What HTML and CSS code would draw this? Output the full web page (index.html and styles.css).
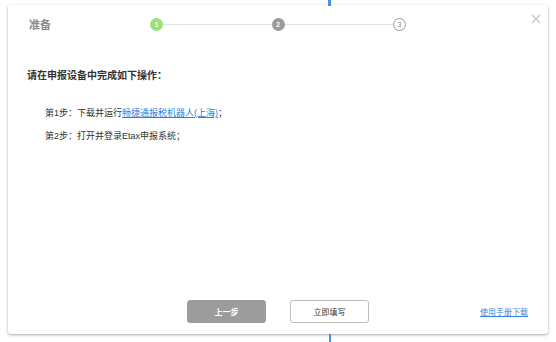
FILE: index.html
```html
<!DOCTYPE html>
<html>
<head>
  <meta charset="utf-8">
  <title>准备</title>
  <link rel="stylesheet" href="styles.css">
</head>
<body>
  <div class="pin pin-top"></div>
  <div class="dialog">
    <div class="dialog-header">
      <div class="title">准备</div>
      <div class="steps">
        <span class="dot dot-done">1</span>
        <span class="line"></span>
        <span class="dot dot-current">2</span>
        <span class="line"></span>
        <span class="dot dot-todo">3</span>
      </div>
      <svg class="close" width="10" height="10" viewBox="0 0 10 10">
        <path d="M1 1 L9 9 M9 1 L1 9" stroke="#cccccc" stroke-width="1.6" fill="none"/>
      </svg>
    </div>

    <div class="dialog-body">
      <h3>请在申报设备中完成如下操作：</h3>
      <p class="step-line">第1步：下载并运行<a href="#">畅捷通报税机器人(上海)</a>；</p>
      <p class="step-line">第2步：打开并登录Etax申报系统；</p>
    </div>

    <div class="dialog-footer">
      <div></div>
      <div class="buttons">
        <button type="button" class="btn btn-prev">上一步</button>
        <button type="button" class="btn btn-fill">立即填写</button>
      </div>
      <a class="manual" href="#">使用手册下载</a>
    </div>
  </div>
  <div class="pin pin-bottom"></div>
</body>
</html>
```

FILE: styles.css
```css
body {
  font-family: "Liberation Sans", "Noto Sans CJK SC", sans-serif;
  background-color: #ffffff;
  margin: 0;
  padding: 5px 8px 8px 8px;
  height: 342px;
  box-sizing: border-box;
}

.dialog {
  width: 540px;
  height: 329px;
  background-color: #ffffff;
  border-radius: 3px;
  box-shadow: 0 1px 3px rgba(0, 0, 0, 0.35);
  display: flex;
  flex-direction: column;
  box-sizing: border-box;
}

.dialog-header {
  display: flex;
  align-items: center;
  height: 38px;
  padding: 0 7px 0 21px;
}

.title {
  width: 121px;
  font-size: 11px;
  font-weight: bold;
  color: #8a8a8a;
}

.steps {
  width: 256px;
  display: flex;
  align-items: center;
}

.dot {
  width: 13px;
  height: 13px;
  border-radius: 50%;
  box-sizing: border-box;
  font-size: 7px;
  font-weight: bold;
  line-height: 13px;
  text-align: center;
  color: #ffffff;
}

.dot-done {
  background-color: #98e27a;
}

.dot-current {
  background-color: #9a9a9a;
}

.dot-todo {
  border: 1px solid #9a9a9a;
  color: #8a8a8a;
  line-height: 11px;
  font-weight: normal;
}

.line {
  flex: 1;
  height: 1px;
  background-color: #e3e3e3;
}

.close {
  margin-left: auto;
  align-self: flex-start;
  margin-top: 9px;
  cursor: pointer;
}

.dialog-body {
  flex: 1;
  padding: 0 19px;
}

.dialog-body h3 {
  margin: 26px 0 0 0;
  font-size: 10px;
  line-height: 14px;
  font-weight: bold;
  color: #333333;
}

.step-line {
  margin: 0 0 0 18px;
  font-size: 9px;
  line-height: 13px;
  color: #333333;
}

.dialog-body h3 + .step-line {
  margin-top: 24px;
}

.step-line + .step-line {
  margin-top: 10px;
}

.step-line a {
  color: #2f7fe0;
  text-decoration: underline;
}

.dialog-footer {
  display: grid;
  grid-template-columns: 1fr auto 1fr;
  align-items: center;
  padding: 0 20px 11px 20px;
}

.buttons {
  display: flex;
  gap: 24px;
}

.btn {
  width: 79px;
  height: 23px;
  border-radius: 3px;
  font-family: inherit;
  font-size: 8px;
  padding: 0;
  cursor: pointer;
}

.btn-prev {
  background-color: #9c9c9c;
  border: 1px solid #9c9c9c;
  color: #ffffff;
  font-weight: bold;
}

.btn-fill {
  background-color: #ffffff;
  border: 1px solid #bdbdbd;
  color: #333333;
}

.manual {
  justify-self: end;
  font-size: 8px;
  color: #3a86e0;
  text-decoration: underline;
}

.pin {
  position: absolute;
  left: 329px;
  width: 2px;
  background-color: #4a90e2;
}

.pin-top {
  top: 0;
  height: 6px;
  width: 3px;
  left: 328px;
}

.pin-bottom {
  top: 334px;
  height: 8px;
}
```
